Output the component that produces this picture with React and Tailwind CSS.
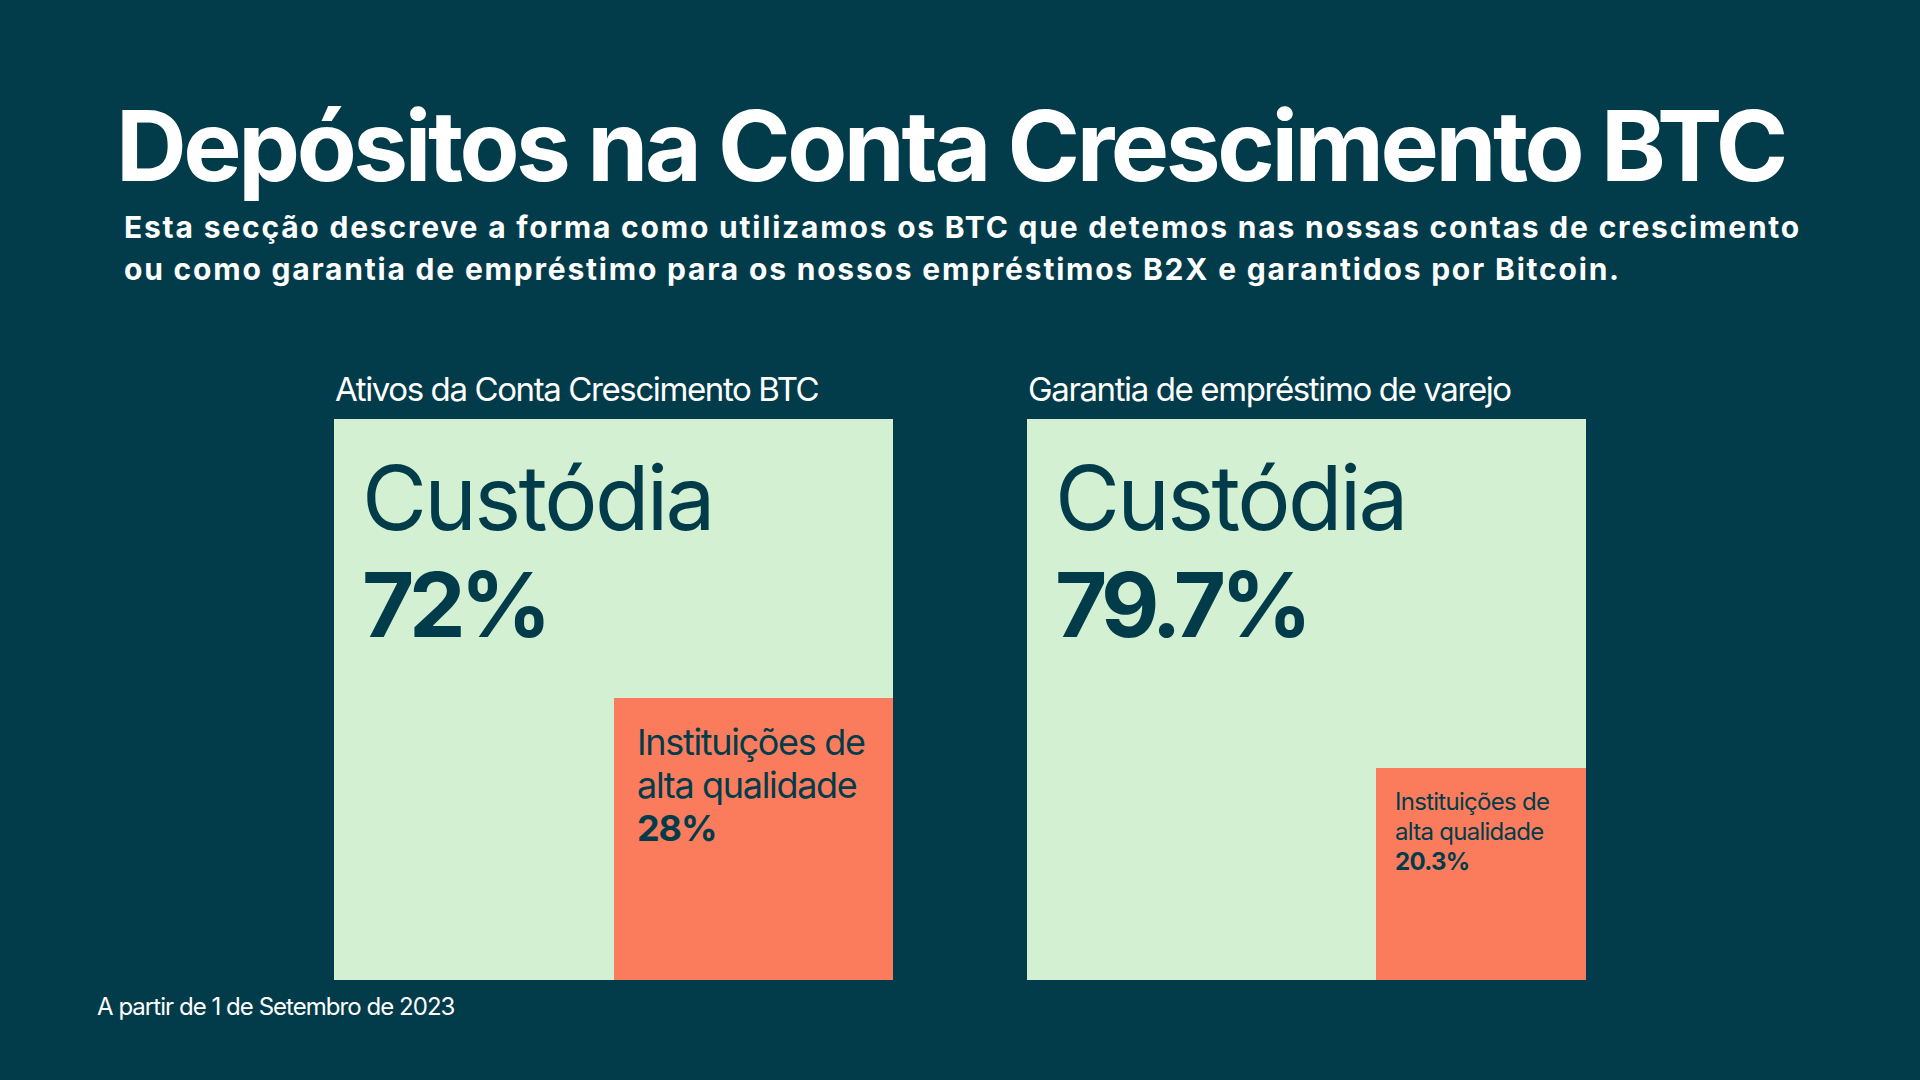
import React from "react";

const charts = [
  {
    label: "Ativos da Conta Crescimento BTC",
    main: "72%",
    other: "28%",
    big: true,
  },
  {
    label: "Garantia de empréstimo de varejo",
    main: "79.7%",
    other: "20.3%",
    big: false,
  },
];

function Chart({ label, main, other, big }) {
  return (
    <div className="flex flex-col">
      <div className="pt-[2px] text-[33px] leading-[40px] tracking-[-0.042em] pl-[1px]">{label}</div>
      <div className="mt-[10px] w-[559px] h-[561px] bg-[#d4f0d3] text-[#023c4a] flex flex-col">
        <div className="pl-[28px] pt-[34px]">
          <div className="text-[89px] leading-none tracking-[-0.03em]">Custódia</div>
          <div className="mt-[18px] text-[90px] leading-none font-bold tracking-[-0.06em]">{main}</div>
        </div>
        {big ? (
          <div className="mt-auto self-end w-[279px] h-[282px] bg-[#fb7c5d] pl-[23px] pt-[23px]">
            <div className="text-[36px] leading-[43px] tracking-[-0.037em]">
              Instituições de
              <br />
              alta qualidade
            </div>
            <div className="text-[36px] leading-[43px] font-bold tracking-[-0.03em]">{other}</div>
          </div>
        ) : (
          <div className="mt-auto self-end w-[210px] h-[212px] bg-[#fb7c5d] pl-[19px] pt-[19px]">
            <div className="text-[24px] leading-[30px] tracking-[-0.03em]">
              Instituições de
              <br />
              alta qualidade
            </div>
            <div className="text-[24px] leading-[30px] font-bold tracking-[-0.03em]">{other}</div>
          </div>
        )}
      </div>
    </div>
  );
}

export default function App() {
  return (
    <div className="w-[1920px] h-[1080px] bg-[#023c4a] text-white font-['Inter',sans-serif] flex flex-col">
      <div className="pl-[116px] pt-[97px]">
        <h1 className="text-[98px] leading-none font-bold tracking-[-0.035em]">
          Depósitos na Conta Crescimento BTC
        </h1>
        <p className="mt-[11px] pl-[8px] text-[30px] leading-[42px] font-bold tracking-[0.06em]">
          Esta secção descreve a forma como utilizamos os BTC que detemos nas nossas contas de crescimento
          <br />
          ou como garantia de empréstimo para os nossos empréstimos B2X e garantidos por Bitcoin.
        </p>
      </div>

      <div className="mt-[77px] pl-[334px] flex gap-[134px]">
        {charts.map((c) => (
          <Chart key={c.label} {...c} />
        ))}
      </div>

      <p className="mt-[12px] pl-[97px] text-[24px] leading-[30px] tracking-[-0.04em]">
        A partir de 1 de Setembro de 2023
      </p>
    </div>
  );
}
